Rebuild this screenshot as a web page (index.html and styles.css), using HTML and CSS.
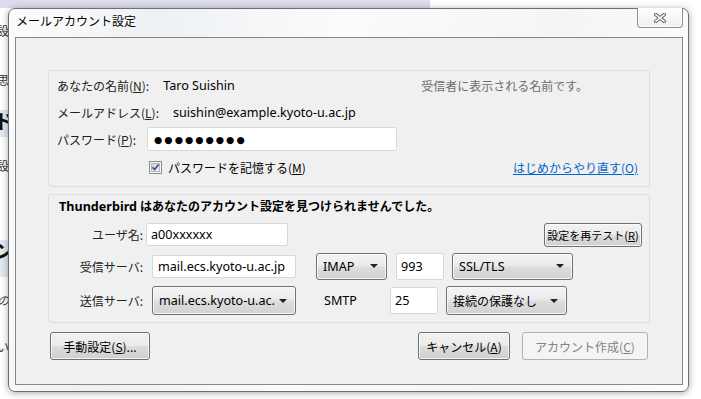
FILE: index.html
```html
<!DOCTYPE html>
<html lang="ja">
<head>
<meta charset="utf-8">
<title>メールアカウント設定</title>
<link rel="stylesheet" href="styles.css">
</head>
<body>
<div class="desk">
  <div class="band"></div>
  <div class="strip s1"></div>
  <div class="strip s2"></div>
  <span class="bg b1">設</span>
  <span class="bg b2">思</span>
  <span class="bg b3">ド</span>
  <span class="bg b4">設</span>
  <span class="bg b5">ン</span>
  <span class="bg b6">の</span>
  <span class="bg b7">い</span>

  <div class="win">
    <div class="titlebar">
      <span class="title">メールアカウント設定</span>
      <div class="close">
        <svg width="12" height="10" viewBox="0 0 12 10">
          <path d="M1.8 1.6 L10.2 8.4 M10.2 1.6 L1.8 8.4" stroke="#5a5a5a" stroke-width="3.4" stroke-linecap="square" fill="none"/>
          <path d="M1.8 1.6 L10.2 8.4 M10.2 1.6 L1.8 8.4" stroke="#fff" stroke-width="1.5" stroke-linecap="square" fill="none"/>
        </svg>
      </div>
    </div>

    <div class="client">
      <div class="group g1">
        <div class="row r1">
          <span class="lbl">あなたの名前(<u>N</u>):</span>
          <span class="val lat">Taro Suishin</span>
          <span class="hint">受信者に表示される名前です。</span>
        </div>
        <div class="row r2">
          <span class="lbl">メールアドレス(<u>L</u>):</span>
          <span class="val lat">suishin@example.kyoto-u.ac.jp</span>
        </div>
        <div class="row r3">
          <span class="lbl">パスワード(<u>P</u>):</span>
          <div class="field pass"><span class="dots">●●●●●●●●●</span></div>
        </div>
        <div class="row r4">
          <svg class="chk" width="13" height="13" viewBox="0 0 13 13">
            <defs>
              <linearGradient id="cb" x1="0" y1="0" x2="1" y2="1">
                <stop offset="0" stop-color="#cbcfd5"/>
                <stop offset="1" stop-color="#f6f6f6"/>
              </linearGradient>
            </defs>
            <rect x="0.5" y="0.5" width="12" height="12" fill="#f4f4f4" stroke="#8f8f8f"/>
            <rect x="2.5" y="2.5" width="8" height="8" fill="url(#cb)" stroke="#b4b9c1"/>
            <path d="M3.5 6.3 L5.6 8.6 L9.6 3.4" stroke="#3b4f8c" stroke-width="1.6" fill="none"/>
          </svg>
          <span class="chklbl">パスワードを記憶する(<u>M</u>)</span>
          <a class="link" href="javascript:;">はじめからやり直す(O)</a>
        </div>
      </div>

      <div class="group g2">
        <div class="head"><span class="lat">Thunderbird</span> はあなたのアカウント設定を見つけられませんでした。</div>
        <div class="row ra">
          <span class="lbl2">ユーザ名:</span>
          <div class="field user lat">a00xxxxxx</div>
          <div class="btn retest">設定を再テスト(<u>R</u>)</div>
        </div>
        <div class="row rb">
          <span class="lbl2">受信サーバ:</span>
          <div class="field host lat">mail.ecs.kyoto-u.ac.jp</div>
          <div class="drop proto lat">IMAP<i class="arr"></i></div>
          <div class="field port lat">993</div>
          <div class="drop sec lat">SSL/TLS<i class="arr"></i></div>
        </div>
        <div class="row rc">
          <span class="lbl2">送信サーバ:</span>
          <div class="drop host2 lat">mail.ecs.kyoto-u.ac.<i class="arr"></i></div>
          <span class="smtp lat">SMTP</span>
          <div class="field port2 lat">25</div>
          <div class="drop sec2">接続の保護なし<i class="arr"></i></div>
        </div>
      </div>

      <div class="actions">
        <div class="btn manual">手動設定(<u>S</u>)...</div>
        <div class="btn cancel">キャンセル(<u>A</u>)</div>
        <div class="btn create off">アカウント作成(<u>C</u>)</div>
      </div>
    </div>
  </div>
</div>
</body>
</html>
```

FILE: styles.css
```css
body{ margin:0; background:#fff; font-family:"Noto Sans","Noto Sans CJK JP",sans-serif; font-size:12px; color:#000; }
u{ text-decoration:underline; }
.lat{ font-size:12.6px; }

.desk{ position:relative; width:701px; height:399px; overflow:hidden; }
.band{ position:absolute; left:0; top:0; width:430px; height:8px; background:#dcdcee; }
.strip{ position:absolute; left:0; width:10px; background:#e4e8ef; }
.s1{ top:110px; height:27px; }
.s2{ top:240px; height:37px; }
.bg{ position:absolute; left:-3px; font-family:"Noto Sans CJK JP",sans-serif; font-size:12px; line-height:14px; color:#333; }
.b1{ top:24px; }
.b2{ top:73px; }
.b3{ top:110px; font-size:20px; line-height:22px; font-weight:bold; left:-6px; color:#111; }
.b4{ top:159px; }
.b5{ top:240px; font-size:20px; line-height:22px; font-weight:bold; left:-6px; color:#111; }
.b6{ top:293px; font-style:italic; }
.b7{ top:340px; }

.win{ position:absolute; left:8px; top:8px; width:681px; height:384px; box-sizing:border-box; border:1px solid #6f6f6f; border-radius:7px; background:linear-gradient(100deg,#fbfcfd 0%,#eef1f4 20%,#fafbfc 45%,#f3f5f7 75%,#fdfdfd 100%); box-shadow:0 1px 7px rgba(0,0,0,.35); padding:0 5px 6px 6px; display:flex; flex-direction:column; }
.titlebar{ height:28px; display:flex; align-items:flex-start; }
.title{ padding:4px 0 0 1px; line-height:16px; font-family:"Noto Sans CJK JP",sans-serif; text-shadow:0 0 6px #fff,0 0 3px #fff; }
.close{ margin-left:auto; margin-top:-1px; width:46px; height:20px; box-sizing:border-box; border:1px solid #8d8d8d; border-top:none; border-radius:0 0 4px 4px; background:linear-gradient(#fefefe,#eceef0); box-shadow:inset 0 0 0 1px rgba(255,255,255,.8); display:flex; align-items:center; justify-content:center; }

.client{ flex:1; border:1px solid #868686; background:#f0f0f0; padding:32px 32px 0; display:flex; flex-direction:column; }
.group{ border:1px solid #d9dee3; border-radius:3px; }
.g1{ padding:0 11px 4px 8px; }
.g2{ margin-top:7px; padding:0 7px 6px 10px; }

.row{ display:flex; align-items:center; }
.r1{ height:28px; }
.r2{ height:27px; }
.r3{ height:26px; }
.r4{ height:30px; }
.lbl{ color:#222; font-family:"Noto Sans CJK JP",sans-serif; }
.val{ margin-left:14px; }
.hint{ margin-left:auto; margin-right:50px; color:#6d6d6d; font-family:"Noto Sans CJK JP",sans-serif; }

.field{ box-sizing:border-box; background:#fff; border:1px solid #d6d9dc; border-radius:2px; display:flex; align-items:center; padding-left:4px; }
.pass{ margin-left:11px; width:250px; height:24px; padding-left:6px; }
.dots{ font-family:"DejaVu Sans",sans-serif; font-size:9.5px; letter-spacing:2px; }

.chk{ margin-left:92px; flex:none; }
.chklbl{ margin-left:6px; font-family:"Noto Sans CJK JP",sans-serif; }
.link{ margin-left:auto; color:#0066cc; text-decoration:underline; font-family:"Noto Sans CJK JP",sans-serif; }

.head{ height:23px; line-height:23px; font-weight:bold; }
.ra{ height:33px; }
.rb{ height:30px; }
.rc{ height:31px; margin-top:4px; }
.lbl2{ width:84px; text-align:right; font-family:"Noto Sans CJK JP",sans-serif; color:#222; }
.user{ margin-left:3px; width:142px; height:23px; }
.host{ margin-left:9px; width:144px; height:23px; padding-left:5px; }
.port{ margin-left:9px; width:48px; height:27px; }
.port2{ margin-left:0; width:48px; height:27px; }
.smtp{ margin-left:28px; width:66px; }

.btn{ box-sizing:border-box; border:1px solid #707070; border-radius:3px; background:linear-gradient(#f2f2f2 0%,#ebebeb 50%,#dddddd 51%,#cfcfcf 100%); box-shadow:inset 0 0 0 1px rgba(255,255,255,.75); display:flex; align-items:center; justify-content:center; font-family:"Noto Sans CJK JP",sans-serif; }
.retest{ margin-left:auto; width:98px; height:24px; font-size:11px; }

.drop{ box-sizing:border-box; border:1px solid #707070; border-radius:3px; background:linear-gradient(#f4f4f4 0%,#ebebeb 45%,#dcdcdc 55%,#d2d2d2 100%); box-shadow:inset 0 0 0 1px rgba(255,255,255,.75); display:flex; align-items:center; padding:0 8px 0 6px; white-space:nowrap; overflow:hidden; }
.arr{ margin-left:auto; flex:none; width:0; height:0; border-left:4px solid transparent; border-right:4px solid transparent; border-top:4px solid #222; }
.proto{ margin-left:20px; width:71px; height:27px; }
.sec{ margin-left:8px; width:121px; height:27px; }
.host2{ margin-left:9px; width:144px; height:29px; }
.sec2{ margin-left:8px; width:121px; height:29px; font-family:"Noto Sans CJK JP",sans-serif; }

.actions{ display:flex; margin-top:9px; }
.manual{ margin-left:2px; width:100px; height:28px; }
.cancel{ margin-left:auto; width:92px; height:28px; }
.create{ margin-left:12px; margin-right:2px; width:126px; height:28px; }
.off{ border-color:#adb2b5; background:#f4f4f4; color:#838383; box-shadow:none; }
```
